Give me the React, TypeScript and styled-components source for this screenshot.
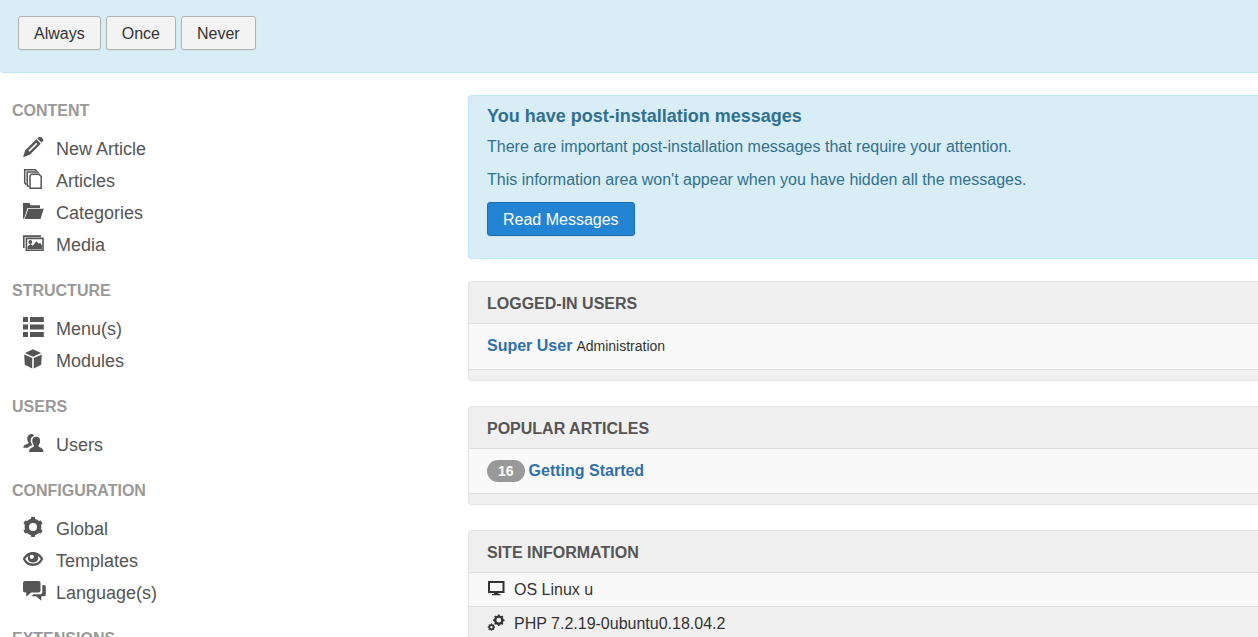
import React from "react";
import styled, { createGlobalStyle, css } from "styled-components";

const GlobalStyle = createGlobalStyle`
  *, *::before, *::after { box-sizing: border-box; }
  body {
    margin: 0;
    background: #fff;
    color: #333;
    font-family: "Liberation Sans", Arial, sans-serif;
    font-size: 16px;
    line-height: 22px;
    overflow-x: hidden;
  }
`;

const StatsBar = styled.section`
  display: flex;
  gap: 5px;
  padding: 16px 18px 22px;
  background: #d9edf7;
  border-bottom: 1px solid #bce8f1;
  border-bottom-left-radius: 4px;
`;

const Button = styled.button<{ $primary?: boolean }>`
  height: 34px;
  padding: 2px 15px 0;
  border: 1px solid #b3b3b3;
  border-radius: 3px;
  background: #f3f3f3;
  color: #333;
  font: inherit;
  box-shadow: 0 1px 2px rgba(0, 0, 0, 0.05);
  cursor: pointer;
  ${(p) =>
    p.$primary &&
    css`
      background: #2384d3;
      border-color: #1f6cab;
      color: #fff;
    `}
`;

const Layout = styled.div`
  display: flex;
  padding-top: 22px;
`;

const Sidebar = styled.nav`
  flex: 0 0 468px;
  padding: 0 12px;
`;

const Group = styled.section`
  padding: 5px 0 14px;
`;

const GroupTitle = styled.h2`
  margin: 0 0 11px;
  color: #999;
  font-size: 16px;
  line-height: 22px;
  font-weight: bold;
  text-transform: uppercase;
`;

const NavList = styled.ul`
  margin: 0;
  padding: 0;
  list-style: none;
`;

const NavLink = styled.a`
  display: flex;
  align-items: center;
  gap: 10px;
  height: 32px;
  padding-left: 10px;
  color: #555;
  font-size: 18px;
  text-decoration: none;
`;

const NavIcon = styled.svg`
  flex: none;
  width: 24px;
  height: 24px;
  margin-bottom: 4px;
  fill: currentColor;
`;

const Main = styled.main`
  flex: 1;
  min-width: 0;
`;

const Notice = styled.section`
  margin-bottom: 22px;
  padding: 9px 18px 22px;
  background: #d9edf7;
  border: 1px solid #bce8f1;
  border-right: 0;
  border-radius: 4px 0 0 4px;
  color: #31708f;
`;

const NoticeTitle = styled.h2`
  margin: 0 0 9px;
  font-size: 18px;
  line-height: 22px;
`;

const NoticeText = styled.p`
  margin: 0 0 11px;
`;

const Panel = styled.section`
  margin-bottom: 25px;
  background: #f0f0f0;
  border: 1px solid #e3e3e3;
  border-right: 0;
  border-radius: 4px 0 0 4px;
`;

const PanelTitle = styled.h2`
  margin: 0;
  padding: 11px 18px 8px;
  color: #555;
  font-size: 16px;
  line-height: 22px;
  text-transform: uppercase;
`;

const Row = styled.div<{ $shaded?: boolean; $padding: string }>`
  display: flex;
  align-items: center;
  padding: ${(p) => p.$padding};
  border-top: 1px solid #ddd;
  background: ${(p) => (p.$shaded ? "#f0f0f0" : "#f9f9f9")};
`;

const PanelFoot = styled.div`
  height: 11px;
  border-top: 1px solid #ddd;
`;

const RowLink = styled.a`
  color: #3071a9;
  font-weight: bold;
  text-decoration: none;
`;

const Small = styled.small`
  margin-left: 4px;
  font-size: 14px;
`;

const Badge = styled.span`
  margin-right: 4px;
  padding: 0 11px;
  border-radius: 11px;
  background: #999;
  color: #fff;
  font-size: 14px;
  font-weight: bold;
`;

const InfoIcon = styled.svg`
  flex: none;
  width: 18px;
  height: 18px;
  margin-right: 9px;
  margin-bottom: 2px;
  fill: currentColor;
`;

const cog = (cx: number, cy: number, r: number, teeth: number, hole: number) => {
  const points: string[] = [];
  for (let i = 0; i < teeth; i++) {
    const a = (i / teeth) * Math.PI * 2 - Math.PI / 2;
    const step = Math.PI / teeth;
    [
      [-0.8, 0.82],
      [-0.5, 0.82],
      [-0.34, 1],
      [0.34, 1],
      [0.5, 0.82],
      [0.8, 0.82],
    ].forEach(([t, k]) => {
      const x = cx + Math.cos(a + t * step) * r * k;
      const y = cy + Math.sin(a + t * step) * r * k;
      points.push(`${x.toFixed(2)} ${y.toFixed(2)}`);
    });
  }
  return `M${points.join("L")}ZM${cx - hole} ${cy}a${hole} ${hole} 0 1 0 ${hole * 2} 0a${hole} ${hole} 0 1 0 ${-hole * 2} 0Z`;
};

const icons: Record<string, React.ReactNode> = {
  pencil: (
    <>
      <path d="M15.4 3.4l1.3-1.2c.8-.8 1.900-.7 2.600 0l1.500 1.500c.8.8.8 1.900 0 2.600l-1.300 1.300Z" />
      <path fillRule="evenodd" d="M14.400 4.300l4.400 4.400L7.800 19.700 1 22.200l2.300-6.900ZM14.200 7.700L6.300 15.600l1.200 1.200 7.900-7.900Z" />
    </>
  ),
  articles: (
    <g fill="none" stroke="currentColor" strokeWidth="1.5">
      <path d="M4.600 17.300H3.800L2.700 15.800V2.700H13.300l1.300 1.200" />
      <path d="M7.200 19.200H6L5.200 18V4.900H15.400l1.200 1.200" />
      <path d="M9.400 7.200H17l2.200 2.300V21.200H8V8.500Z" />
    </g>
  ),
  folder: <path d="M1 20V4h6.500l1.200 2.200H18V9H5.500L2.300 19ZM6.300 9.800H21.700L18.500 20H2.700Z" />,
  media: (
    <>
      <path d="M1 4.200h18v1.700H2.600V17H1Z" />
      <path fillRule="evenodd" d="M3.600 6.600H21.800V20H3.600ZM5.200 8.200V18.400H20.200V8.200Z" />
      <circle cx="8.300" cy="11" r="1.900" />
      <path d="M5.600 18v-2.400l3-2.500 2.100 1.700 3.800-4.600 2.300 2.600 1.300-1 1.800 2.500v3.700Z" />
    </>
  ),
  list: <path d="M1 2h5v5H1ZM8 2h13.800v5H8ZM1 9.600h5v5H1ZM8 9.600h13.800v5H8ZM1 17h5v5H1ZM8 17h13.800v5H8Z" />,
  cube: <path d="M11 2.300l8.100 3.700L11 9.800 3 6ZM2.200 7.500L10.200 11v10.500L2.800 17.700ZM19.800 7.500L11.800 11v10.500l7.400-3.800Z" />,
  users: (
    <>
      <path d="M7.600 3.600C9 2.500 11.500 3 12 5c-3.300.8-4 4-2.600 7.400l1 1.600-3.200 1.500-1.200 1.300H1.300c0-2.400 1.500-2.800 4.600-4 .8-.4.9-1.300.3-2C4.900 9 4.500 5.700 7.600 3.600Z" />
      <path d="M14.200 5.800c3.100 0 4.300 2.200 3.800 5.300-.2 1.400-.8 2.400-1.300 3-.4.800-.2 1.500.5 1.800 2.800 1.100 4.200 1.600 4.300 5.100H7.100c0-3.500 1.400-4 4.200-5.100.8-.3.9-1.200.4-1.800-.7-.8-1.100-1.700-1.300-3-.5-3.100.7-5.300 3.800-5.300Z" />
    </>
  ),
  cog: <path fillRule="evenodd" d={cog(11, 12, 10.2, 6, 4)} />,
  eye: (
    <path
      fillRule="evenodd"
      d="M.8 12c2-4.500 5.900-6.900 10.200-6.900S19.200 7.500 21.200 12c-2 4.500-5.900 6.900-10.200 6.900S2.800 16.500.8 12ZM3.200 12c1.800 3 4.500 4.500 7.800 4.500s6-1.500 7.800-4.500c-.8-1.300-1.800-2.300-3.100-3.100 1.400 3.700-.9 6.500-4.700 6.500s-6.100-2.800-4.700-6.500C5 9.700 4 10.700 3.200 12ZM9.800 7.800a2.100 2.100 0 1 0 .1 4.200 2.100 2.100 0 0 0-.1-4.200Z"
    />
  ),
  comments: (
    <>
      <path d="M3 2H16.500q2 0 2 2v7.500q0 2-2 2H9.200L4.200 17.800V13.500H3q-2 0-2-2V4q0-2 2-2Z" />
      <path d="M20.300 6H22q1.800 0 1.800 1.800V15.500q0 1.800-1.800 1.800H19.300V21.800L14 17.300H9.500L11.500 15.200H18.500q1.800 0 1.800-1.800Z" />
    </>
  ),
};

const groups = [
  {
    title: "Content",
    items: [
      ["pencil", "New Article"],
      ["articles", "Articles"],
      ["folder", "Categories"],
      ["media", "Media"],
    ],
  },
  {
    title: "Structure",
    items: [
      ["list", "Menu(s)"],
      ["cube", "Modules"],
    ],
  },
  { title: "Users", items: [["users", "Users"]] },
  {
    title: "Configuration",
    items: [
      ["cog", "Global"],
      ["eye", "Templates"],
      ["comments", "Language(s)"],
    ],
  },
  { title: "Extensions", items: [] },
];

export default function App() {
  return (
    <>
      <GlobalStyle />
      <StatsBar>
        <Button type="button">Always</Button>
        <Button type="button">Once</Button>
        <Button type="button">Never</Button>
      </StatsBar>
      <Layout>
        <Sidebar>
          {groups.map((group) => (
            <Group key={group.title}>
              <GroupTitle>{group.title}</GroupTitle>
              <NavList>
                {group.items.map(([icon, label]) => (
                  <li key={label}>
                    <NavLink href="#">
                      <NavIcon viewBox="0 0 24 24" aria-hidden="true">
                        {icons[icon]}
                      </NavIcon>
                      {label}
                    </NavLink>
                  </li>
                ))}
              </NavList>
            </Group>
          ))}
        </Sidebar>
        <Main>
          <Notice>
            <NoticeTitle>You have post-installation messages</NoticeTitle>
            <NoticeText>
              There are important post-installation messages that require your attention.
            </NoticeText>
            <NoticeText>
              This information area won't appear when you have hidden all the messages.
            </NoticeText>
            <Button type="button" $primary>
              Read Messages
            </Button>
          </Notice>
          <Panel>
            <PanelTitle>Logged-in Users</PanelTitle>
            <Row $padding="11px 18px 12px">
              <RowLink href="#">Super User</RowLink>
              <Small>Administration</Small>
            </Row>
            <PanelFoot />
          </Panel>
          <Panel>
            <PanelTitle>Popular Articles</PanelTitle>
            <Row $padding="11px 18px">
              <Badge>16</Badge>
              <RowLink href="#">Getting Started</RowLink>
            </Row>
            <PanelFoot />
          </Panel>
          <Panel>
            <PanelTitle>Site Information</PanelTitle>
            <Row $padding="6px 18px 5px">
              <InfoIcon viewBox="0 0 18 18" aria-hidden="true">
                <path fillRule="evenodd" d="M1 1H17.500V13H1ZM3 3V11H15.500V3ZM7 13h4.500v1H13.500v1.300H5V14H7Z" />
              </InfoIcon>
              OS Linux u
            </Row>
            <Row $shaded $padding="6px 18px 5px">
              <InfoIcon viewBox="0 0 18 18" aria-hidden="true">
                <path fillRule="evenodd" d={cog(11.8, 6.2, 5.8, 8, 2.4)} />
                <path fillRule="evenodd" d={cog(4.4, 13.2, 3.7, 8, 1.2)} />
              </InfoIcon>
              PHP 7.2.19-0ubuntu0.18.04.2
            </Row>
          </Panel>
        </Main>
      </Layout>
    </>
  );
}
